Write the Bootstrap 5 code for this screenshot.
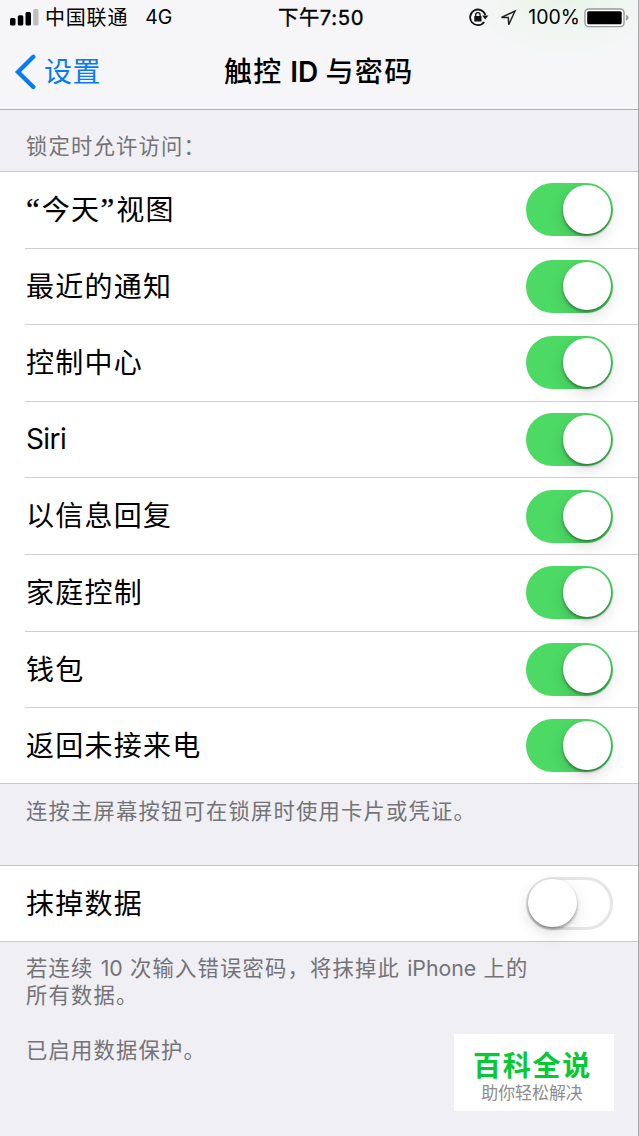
<!DOCTYPE html>
<html lang="zh-CN">
<head>
<meta charset="utf-8">
<meta name="viewport" content="width=device-width, initial-scale=1">
<title>触控 ID 与密码</title>
<link href="https://cdn.jsdelivr.net/npm/bootstrap@5.3.0/dist/css/bootstrap.min.css" rel="stylesheet">
<style>
  body { background: #efeff4; color: #000; font-family: Inter, "Noto Sans CJK SC", sans-serif; line-height: 1.2; overflow: hidden; }
  .screen { height: 1136px; border-right: 1px solid #a9a9ac; }
  .top-area { height: 110px; border-bottom: 1px solid #b2b2b5; background: radial-gradient(ellipse 100px 60px at 565px 0, #e9f5e9, transparent), #f6f6f8; }
  .status { height: 36px; font-size: 18.6px; }
  .status .carrier { font-size: 20px; letter-spacing: .8px; margin-left: 6px; }
  .status .clock { font-size: 20.3px; -webkit-text-stroke: .35px #000; letter-spacing: .65px; left: 278px; top: 6px; }
  .title-bar { height: 73px; }
  .back { color: #087bf0; font-size: 28px; letter-spacing: .6px; padding-left: 14px; }
  .heading { left: 224px; top: 20px; font-size: 28px; font-weight: 500; letter-spacing: 1.35px; word-spacing: -1.4px; white-space: nowrap; }
  .heading .latin { font-weight: 600; }
  .note { font-size: 21.3px; letter-spacing: 1.2px; line-height: 27.3px; color: #737378; padding-left: 26px; }
  .latin { letter-spacing: 0; }
  .settings { border-top: 1px solid #c8c8cc; border-bottom: 1px solid #c8c8cc; border-radius: 0; background: #fff; }
  .settings .list-group-item { height: 76.6px; margin-left: 25px; padding: 0 25px 0 1px; border: 0; border-bottom: 1px solid #cfced2; border-radius: 0; color: #000; font-size: 28px; letter-spacing: 1.25px; }
  .settings .list-group-item:last-child { border-bottom: 0; height: 75px; }
  .settings .cjk { padding-top: 2px; }
  .settings .siri { letter-spacing: -.6px; }
  .settings .quote { font-family: "Liberation Serif", serif; font-size: 31px; line-height: 1; letter-spacing: 2.1px; -webkit-text-stroke: .3px #000; }
  .toggle { width: 87px; height: 53px; border-radius: 27px; padding: 2px; border: 0; background: #4cd964; }
  .toggle.on { justify-content: flex-end; }
  .toggle.off { background: #fff; box-shadow: inset 0 0 0 3px #e5e5e5; }
  .knob { width: 48.5px; height: 48.5px; border-radius: 50%; background: #fff; box-shadow: 0 2px 3px rgba(0,0,0,.38), 0 6px 15px rgba(0,0,0,.13); }
  .stamp { left: 454px; top: 1034px; width: 160px; height: 77px; background: #fff; }
  .stamp-name { color: #06c934; font-size: 28px; font-weight: 700; letter-spacing: 1.7px; line-height: 32px; margin: 16px 3px 1px 0; }
  .stamp-line { color: #8c8c8c; font-size: 16.9px; line-height: 20px; margin-right: 4px; }
</style>
</head>
<body>
<main class="screen position-relative">
  <header class="top-area">
    <div class="status d-flex align-items-center position-relative">
      <svg width="29" height="18" viewBox="0 0 29 18" style="margin-left:10px">
        <rect x="0" y="9" width="5.5" height="7.5" rx="1.5"/><rect x="7.8" y="6.3" width="5.5" height="10.2" rx="1.5"/><rect x="15.5" y="3" width="5.5" height="13.5" rx="1.5"/><rect x="23.2" y="0" width="5.3" height="16.5" rx="1.5" fill="#bdbdbd"/>
      </svg>
      <span class="carrier text-nowrap">中国联通</span>
      <span class="latin" style="margin-left:17px;font-size:19.5px">4G</span>
      <span class="clock position-absolute text-nowrap">下午7:50</span>
      <div class="ms-auto d-flex align-items-center">
        <svg width="20" height="19" viewBox="0 0 20 19" fill="none" stroke="#111" stroke-width="1.8">
          <path d="M16.4 7A7.8 7.8 0 1 0 15.2 14"/><path d="M13.2 7.5h6.2l-3.2 4z" fill="#111" stroke="none"/>
          <rect x="5.3" y="8" width="7.2" height="5.5" rx=".6" fill="#111" stroke="none"/><path d="M6.7 8.5V6.8a2.2 2.2 0 0 1 4.4 0v1.7" stroke-width="1.3"/>
        </svg>
        <svg width="19" height="18" viewBox="0 0 19 18" style="margin-left:10px" fill="none" stroke="#222" stroke-width="1.5" stroke-linejoin="miter"><path d="M2.5 8.4L16 2 9.7 15.8 9.3 8.5z"/></svg>
        <span style="margin-left:10px;font-size:19.5px">100%</span>
        <svg width="46" height="20" viewBox="0 0 46 20" style="margin:0 8px 0 4px">
          <rect x="1" y="1" width="39" height="17.6" rx="3.5" fill="#fff" stroke="#999" stroke-width="1.4"/><rect x="3.2" y="3.3" width="34.5" height="13" rx="1.5"/><path d="M42 6.8q2.5 1 2.5 3t-2.5 3z" fill="#999"/>
        </svg>
      </div>
    </div>
    <div class="title-bar position-relative d-flex align-items-center">
      <a class="back d-flex align-items-center text-decoration-none text-nowrap" href="#">
        <svg width="22" height="38" viewBox="0 0 22 38" fill="none" stroke="#087bf0" stroke-width="4.3" stroke-linecap="round" stroke-linejoin="miter"><path d="M19.3 2.8L4 18l15.3 15"/></svg>
        <span style="margin-left:8px;padding-top:1px">设置</span>
      </a>
      <h1 class="heading position-absolute m-0">触控 <span class="latin">ID</span> 与密码</h1>
    </div>
  </header>

  <div class="note d-flex align-items-end" style="height:61px;padding-bottom:11px">锁定时允许访问：</div>
  <ul class="settings list-group mb-0">
    <li class="list-group-item d-flex align-items-center justify-content-between"><span class="cjk"><span class="quote">“</span>今天<span class="quote">”</span>视图</span><span class="toggle on d-flex"><i class="knob"></i></span></li>
    <li class="list-group-item d-flex align-items-center justify-content-between"><span class="cjk">最近的通知</span><span class="toggle on d-flex"><i class="knob"></i></span></li>
    <li class="list-group-item d-flex align-items-center justify-content-between"><span class="cjk">控制中心</span><span class="toggle on d-flex"><i class="knob"></i></span></li>
    <li class="list-group-item d-flex align-items-center justify-content-between"><span class="siri">Siri</span><span class="toggle on d-flex"><i class="knob"></i></span></li>
    <li class="list-group-item d-flex align-items-center justify-content-between"><span class="cjk">以信息回复</span><span class="toggle on d-flex"><i class="knob"></i></span></li>
    <li class="list-group-item d-flex align-items-center justify-content-between"><span class="cjk">家庭控制</span><span class="toggle on d-flex"><i class="knob"></i></span></li>
    <li class="list-group-item d-flex align-items-center justify-content-between"><span class="cjk">钱包</span><span class="toggle on d-flex"><i class="knob"></i></span></li>
    <li class="list-group-item d-flex align-items-center justify-content-between"><span class="cjk">返回未接来电</span><span class="toggle on d-flex"><i class="knob"></i></span></li>
  </ul>
  <div class="note" style="height:80.8px;padding-top:13.5px">连按主屏幕按钮可在锁屏时使用卡片或凭证。</div>
  <ul class="settings list-group mb-0">
    <li class="list-group-item d-flex align-items-center justify-content-between"><span class="cjk">抹掉数据</span><span class="toggle off d-flex"><i class="knob"></i></span></li>
  </ul>
  <div class="note" style="padding-top:13px">若连续 <span class="latin">10</span> 次输入错误密码，将抹掉此 <span class="latin">iPhone</span> 上的<br>所有数据。<br><br>已启用数据保护。</div>

  <aside class="stamp position-absolute text-center">
    <div class="stamp-name">百科全说</div>
    <div class="stamp-line">助你轻松解决</div>
  </aside>
</main>
<script src="https://cdn.jsdelivr.net/npm/bootstrap@5.3.0/dist/js/bootstrap.bundle.min.js"></script>
</body>
</html>
